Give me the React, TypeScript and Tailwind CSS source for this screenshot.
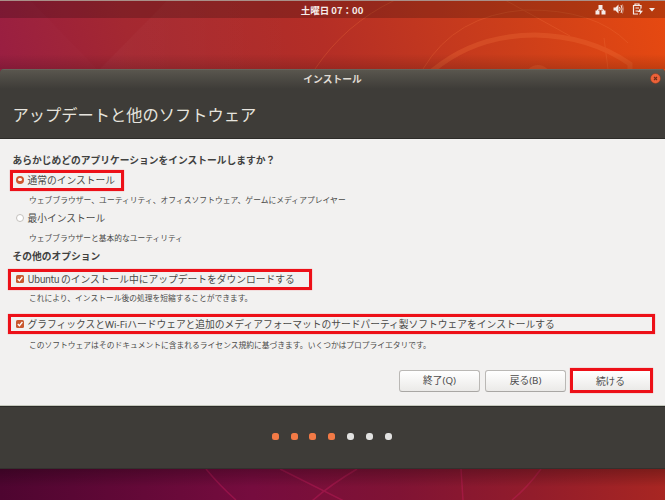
import React from "react";

const redBox = "border-3 border-[#ed1018] shadow-[0_0_1px_#ed101888]";

function Wallpaper() {
  return (
    <svg className="absolute inset-0" width="665" height="500" viewBox="0 0 665 500">
      <defs>
        <linearGradient id="top" x1="0" y1="80" x2="650" y2="-90" gradientUnits="userSpaceOnUse">
          <stop offset="0" stopColor="#981c40" />
          <stop offset="0.2" stopColor="#a42831" />
          <stop offset="0.48" stopColor="#b42e26" />
          <stop offset="0.75" stopColor="#cc3e1a" />
          <stop offset="1" stopColor="#e84a10" />
        </linearGradient>
        <linearGradient id="bottom" x1="0" y1="469" x2="665" y2="469" gradientUnits="userSpaceOnUse">
          <stop offset="0" stopColor="#4e0530" />
          <stop offset="0.38" stopColor="#760c3e" />
          <stop offset="0.6" stopColor="#801334" />
          <stop offset="0.8" stopColor="#921c2b" />
          <stop offset="1" stopColor="#a82622" />
        </linearGradient>
        <linearGradient id="facet" x1="100" y1="0" x2="300" y2="0" gradientUnits="userSpaceOnUse">
          <stop offset="0" stopColor="#fff" stopOpacity="0.025" />
          <stop offset="1" stopColor="#fff" stopOpacity="0" />
        </linearGradient>
        <linearGradient id="shadeTop" x1="0" y1="54" x2="0" y2="69" gradientUnits="userSpaceOnUse">
          <stop offset="0" stopColor="#000" stopOpacity="0" />
          <stop offset="1" stopColor="#000" stopOpacity="0.15" />
        </linearGradient>
        <linearGradient id="shadeBottom" x1="0" y1="469" x2="0" y2="487" gradientUnits="userSpaceOnUse">
          <stop offset="0" stopColor="#000" stopOpacity="0.25" />
          <stop offset="1" stopColor="#000" stopOpacity="0" />
        </linearGradient>
      </defs>
      <rect width="665" height="250" fill="url(#top)" />
      <rect y="250" width="665" height="250" fill="url(#bottom)" />
      <path d="M30 0 97 69H0V0Z" fill="#fff" opacity="0.012" />
      <path d="M168 0 100 69H300V0Z" fill="url(#facet)" />
      <g fill="none" stroke="#f0703a" opacity="0.3">
        <path d="M432 71Q475 35 535 35Q590 36 630 64V72" strokeWidth="5" />
        <path d="M423 69Q455 15 525 10Q595 9 628 43" />
        <path d="M315 69Q345 24 395 0M505 0 570 36M604 38 608 69" />
        <circle cx="538" cy="78" r="13" fill="#f0703a" stroke="none" />
      </g>
      <g fill="none" stroke="#c81e5c" strokeWidth="1.500" opacity="0.4">
        <path d="M206 469Q220 486 236 500M280 469 344 501M357 469Q330 485 312 501M461 469 463 500M541 469Q527 488 512 500" />
      </g>
      <rect y="50" width="665" height="19" fill="url(#shadeTop)" />
      <rect y="469" width="665" height="23" fill="url(#shadeBottom)" />
    </svg>
  );
}

function StatusIcons() {
  return (
    <svg className="absolute right-0 top-0" width="80" height="18" viewBox="585 1 80 18" fill="#f5ece9">
      <path d="M598.500 5h4v4h-4zM595.500 10.500h4v4h-4zM601.500 10.500h4v4h-4z" />
      <path d="M600.500 8v2M597.500 11.500V9.700h6v1.800" fill="none" stroke="#f5ece9" />
      <path d="M613.500 7.500h2l3-3v9l-3-3h-2z" />
      <path d="M619.500 7q1.300 2 0 4M621 5q2.200 4 0 8" fill="none" stroke="#f5ece9" />
      <path d="M622.500 4.500q1.800 4.500 0 9" fill="none" stroke="#f5ece9" opacity="0.45" />
      <path d="M635 5.500V4h4v1.500M641 8.500v-3h-7.500v8.500h4.500M635.500 8h3.500M635.500 11h2.500" fill="none" stroke="#f5ece9" strokeWidth="1.200" />
      <path d="M640.500 8 637.500 12h2.500l-.500 3 3.500-4.300h-2.500z" />
      <path d="M649 8h6l-3 3.500z" />
    </svg>
  );
}

function Radio({ on = false }: { on?: boolean }) {
  return on ? (
    <span className="-mt-[3px] flex size-[8px] shrink-0 items-center justify-center rounded-full bg-[#cf5730]">
      <span className="size-[3.500px] rounded-full bg-[#fff6f0]" />
    </span>
  ) : (
    <span className="-mt-[3px] size-[8px] shrink-0 rounded-full border border-[#c4c1bd] bg-white" />
  );
}

function Check() {
  return (
    <svg className="-mt-[2px] shrink-0" width="8" height="8" viewBox="0 0 8 8">
      <rect width="8" height="8" rx="1.500" fill="#c9582f" />
      <path d="m1.800 4 1.600 1.700 3-3.700" fill="none" stroke="#fff" strokeWidth="1.300" />
    </svg>
  );
}

const button =
  "flex h-[22px] w-[81px] items-center justify-center rounded-[3px] border border-[#bab8b5] border-b-[#a9a7a4] bg-linear-to-b from-white to-[#ebeae8] pt-[2px] text-[9.750px] text-[#4c4c4c]";

export default function App() {
  return (
    <div
      lang="ja"
      className="relative h-[500px] w-[665px] overflow-hidden whitespace-nowrap font-['Noto_Sans','Noto_Sans_CJK_JP',sans-serif] text-[#4a4a48]"
    >
      <Wallpaper />
      <div className="relative flex h-full flex-col">
        <header className="relative flex h-[18px] items-center justify-center border-t border-[#a99089] bg-black/20 pt-px text-[9.500px] font-bold text-[#f5ece9]">
          <span className="pr-[1px] font-['Noto_Sans_CJK_JP',sans-serif]">土曜日 07：00</span>
          <StatusIcons />
        </header>
        <main className="mt-[51px] flex h-[400px] flex-col overflow-hidden rounded-t-[4px] bg-[#3e3c38]">
          <div className="relative flex h-[20px] items-center justify-center border-t border-[#66635b] bg-linear-to-b from-[#59564e] to-[#3e3c38] pt-px text-[9.750px] font-bold text-[#e0dcd4]">
            インストール
            <svg className="absolute right-[4px] top-[3px]" width="11" height="11" viewBox="0 0 11 11">
              <circle cx="5.500" cy="5.500" r="5" fill="#ed6239" stroke="#7b3a25" strokeWidth="0.500" />
              <path d="m4 4 3 3m0-3-3 3" stroke="#6e2c18" strokeWidth="1.100" />
            </svg>
          </div>
          <h1 className="flex h-[50px] items-center border-b border-[#2c2b28] pl-[12.500px] pt-[3px] text-[16.250px] font-normal text-[#e6e4de]">
            アップデートと他のソフトウェア
          </h1>
          <section className="flex h-[267px] flex-col border-b border-[#c5c8bd] bg-[#f2f1f0] pt-[11px] text-[9.750px]">
            <h2 className="flex h-[20px] items-center pl-[12.500px] pt-[2px] font-bold text-[#41413f]">
              あらかじめどのアプリケーションをインストールしますか？
            </h2>
            <div className={`ml-[10px] flex h-[21px] w-[114px] items-center gap-[3.500px] pl-[3px] pt-px ${redBox}`}>
              <Radio on />
              <span>通常のインストール</span>
            </div>
            <p className="flex h-[18px] items-center pl-[29px] pt-[2px] text-[7.800px]">
              ウェブブラウザー、ユーティリティ、オフィスソフトウェア、ゲームにメディアプレイヤー
            </p>
            <div className="flex h-[19px] items-center gap-[3.500px] pl-[16px] pt-px">
              <Radio />
              <span>最小インストール</span>
            </div>
            <p className="flex h-[19px] items-center pl-[29px] pt-[2px] text-[7.750px]">ウェブブラウザーと基本的なユーティリティ</p>
            <h2 className="flex h-[18px] items-center pl-[12.500px] pt-[2px] font-bold text-[#41413f]">その他のオプション</h2>
            <div className={`ml-[8px] mt-[4px] flex h-[21px] w-[304px] items-center gap-[3.500px] pl-[5px] ${redBox}`}>
              <Check />
              <span className="font-['Noto_Sans_CJK_JP',sans-serif]">
                <span className="tracking-[-0.450px]">Ubuntu </span>
                のインストール中にアップデートをダウンロードする
              </span>
            </div>
            <p className="flex h-[17px] items-center pl-[29px] text-[7.750px]">
              これにより、インストール後の処理を短縮することができます。
            </p>
            <div className={`ml-[8px] mt-[7px] flex h-[20px] w-[647px] items-center gap-[3.500px] pl-[5px] pt-[2px] ${redBox}`}>
              <Check />
              <span>グラフィックスとWi-Fiハードウェアと追加のメディアフォーマットのサードパーティ製ソフトウェアをインストールする</span>
            </div>
            <p className="mt-[2px] flex h-[18px] items-center pl-[29px] pt-[2px] text-[7.780px]">
              このソフトウェアはそのドキュメントに含まれるライセンス規約に基づきます。いくつかはプロプライエタリです。
            </p>
            <div className="mt-[14px] flex items-center justify-end pr-[12px]">
              <button className={button}>終了(Q)</button>
              <button className={`ml-[5px] ${button}`}>戻る(B)</button>
              <button
                className={`ml-[4px] flex h-[25px] w-[83px] items-center justify-center bg-linear-to-b from-white to-[#ebeae8] pr-[2px] pt-[4px] text-[9.750px] text-[#4c4c4c] ${redBox}`}
              >
                続ける
              </button>
            </div>
          </section>
          <footer className="flex grow items-center justify-center gap-[11.800px] border-t border-[#2c2b28] border-b border-b-[#33312e] pb-[2px] pr-[1.500px]">
            {[0, 1, 2, 3, 4, 5, 6].map((i) => (
              <span
                key={i}
                className={`h-[7px] w-[7px] ${i < 4 ? "rounded-[2.500px] bg-[#f27a46]" : "rounded-[3px] bg-[#e2e2e1]"}`}
              />
            ))}
          </footer>
        </main>
      </div>
    </div>
  );
}
